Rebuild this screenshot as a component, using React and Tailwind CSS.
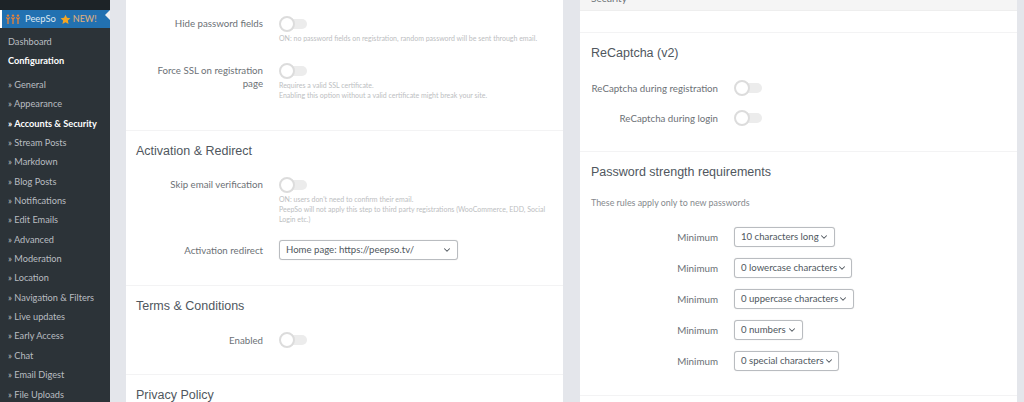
import { ChevronDown } from "lucide-react";

const menuItems = [
  "General",
  "Appearance",
  "Accounts & Security",
  "Stream Posts",
  "Markdown",
  "Blog Posts",
  "Notifications",
  "Edit Emails",
  "Advanced",
  "Moderation",
  "Location",
  "Navigation & Filters",
  "Live updates",
  "Early Access",
  "Chat",
  "Email Digest",
  "File Uploads",
];

const Toggle = () => (
  <div className="relative w-7 h-4 shrink-0">
    <div className="absolute left-1 right-0 top-[3px] h-2.5 rounded-full bg-[#ececec]"></div>
    <div className="absolute left-0 top-0 w-4 h-4 rounded-full bg-white border-2 border-[#dcdcdc]"></div>
  </div>
);

const Select = ({ label, width }) => (
  <div
    className={`${width} h-5 flex items-center justify-between pl-[6px] pr-[5px] bg-white border border-[#b9bcc0] rounded-[3px] text-[9.6px] text-[#50575e] whitespace-nowrap shadow-[0_0_1px_#ccc]`}
  >
    <span>{label}</span>
    <ChevronDown className="w-2.5 h-2.5 shrink-0 text-[#50575e]" strokeWidth={2.5} />
  </div>
);

const Note = ({ children }) => (
  <p className="text-[7px] leading-[10px] text-[#bcbec1] max-w-[272px]">{children}</p>
);

const Heading = ({ children, className = "" }) => (
  <h3 className={`font-['Liberation_Sans',sans-serif] text-[12.5px] leading-5 text-[#50575e] ${className}`}>
    {children}
  </h3>
);

const Row = ({ label, children }) => (
  <div className="flex gap-4">
    <div className="w-[137px] shrink-0 pt-px text-right text-[9.7px] leading-[13px] text-[#6c7176]">{label}</div>
    <div className="flex-1 min-w-0">{children}</div>
  </div>
);

const Divider = () => <div className="h-px bg-[#f3f3f4]"></div>;

const Person = ({ x }) => (
  <g transform={`translate(${x} 0)`}>
    <circle cx="2" cy="1.6" r="1.2" fill="#e8823a" />
    <path d="M0.3 3.4 2 5.2 3.7 3.4M2 5 2 10" fill="none" stroke="#e8823a" strokeWidth="1.3" />
  </g>
);

export default function App() {
  return (
    <div className="flex h-[402px] w-[1024px] overflow-hidden bg-[#e4e6eb] font-['Lato',sans-serif]">
      {/* Sidebar */}
      <aside className="w-[110px] shrink-0 bg-[#2c3338] text-[#b9bdc1] text-[9.2px]">
        <div className="h-2.5 bg-[#1d2327]"></div>
        <div className="relative h-[18px] flex items-center bg-[#2271b1] border-l-2 border-white pl-1 text-[9.4px] text-[#dfe9f2]">
          <svg viewBox="0 0 14 10" className="w-[14px] h-[10px] shrink-0 mr-[5px]">
            <Person x={0} />
            <Person x={5} />
            <Person x={10} />
          </svg>
          <span>PeepSo</span>
          <svg viewBox="0 0 24 24" className="w-[11px] h-[11px] shrink-0 ml-1 mr-[2px]" fill="#f5a623">
            <path d="M12 1.5l3.2 6.9 7.5.9-5.5 5.1 1.5 7.4L12 18.1l-6.7 3.7 1.5-7.4L1.3 9.3l7.5-.9z" />
          </svg>
          <span className="text-[#e3b27a] text-[9px]">NEW!</span>
          <div className="absolute right-0 top-0 w-0 h-0 border-y-[5px] border-y-transparent border-r-[5px] border-r-[#f0f0f1]"></div>
        </div>
        <div className="pl-2 pt-[4px]">
          <div className="h-[19px] leading-[19px]">Dashboard</div>
          <div className="h-[19px] leading-[19px] font-bold text-white mb-[5px]">Configuration</div>
          {menuItems.map((item) => (
            <div
              key={item}
              className={`h-[19.35px] leading-[19.35px] whitespace-nowrap ${
                item === "Accounts & Security" ? "font-bold text-white" : ""
              }`}
            >
              » {item}
            </div>
          ))}
        </div>
      </aside>

      {/* Left card */}
      <main className="ml-4 w-[437px] shrink-0 bg-white">
        <div className="pr-2.5 pt-4">
          <Row label="Hide password fields">
            <Toggle />
            <div className="mt-px">
              <Note>ON: no password fields on registration, random password will be sent through email.</Note>
            </div>
          </Row>
          <div className="mt-5">
            <Row label={<>Force SSL on registration<br />page</>}>
              <Toggle />
              <div className="mt-px">
                <Note>Requires a valid SSL certificate.</Note>
                <Note>Enabling this option without a valid certificate might break your site.</Note>
              </div>
            </Row>
          </div>
        </div>
        <div className="mt-[30px]">
          <Divider />
        </div>
        <Heading className="pl-2.5 pt-2.5">Activation &amp; Redirect</Heading>
        <div className="pr-2.5 pt-4">
          <Row label="Skip email verification">
            <Toggle />
            <div className="mt-px">
              <Note>ON: users don't need to confirm their email.</Note>
              <Note>PeepSo will not apply this step to third party registrations (WooCommerce, EDD, Social Login etc.)</Note>
            </div>
          </Row>
          <div className="mt-4">
            <Row label={<span className="leading-[18px] block">Activation redirect</span>}>
              <Select label="Home page: https://peepso.tv/" width="w-[179px]" />
            </Row>
          </div>
        </div>
        <div className="mt-[25px]">
          <Divider />
        </div>
        <Heading className="pl-2.5 pt-2.5">Terms &amp; Conditions</Heading>
        <div className="pr-2.5 pt-4">
          <Row label={<span className="leading-[14px] block">Enabled</span>}>
            <Toggle />
          </Row>
        </div>
        <div className="mt-[26px]">
          <Divider />
        </div>
        <Heading className="pl-2.5 pt-2.5">Privacy Policy</Heading>
      </main>

      {/* Right card */}
      <section className="ml-[17px] w-[437px] shrink-0 bg-white">
        <div className="h-[11px] overflow-hidden bg-[#f5f5f5] border-b border-[#eeeeee] pl-[11px]">
          <div className="-mt-[9px] text-[10px] leading-[14px] text-[#6c7176]">Security</div>
        </div>
        <div className="mt-[21px]">
          <Divider />
        </div>
        <Heading className="pl-[11px] pt-2.5">ReCaptcha (v2)</Heading>
        <div className="pl-[11px] pt-[17px] flex flex-col gap-[14px]">
          <div className="flex items-center gap-4">
            <div className="w-[127px] text-right text-[9.7px] leading-4 text-[#6c7176] whitespace-nowrap">ReCaptcha during registration</div>
            <Toggle />
          </div>
          <div className="flex items-center gap-4">
            <div className="w-[127px] text-right text-[9.7px] leading-4 text-[#6c7176] whitespace-nowrap">ReCaptcha during login</div>
            <Toggle />
          </div>
        </div>
        <div className="mt-[25px]">
          <Divider />
        </div>
        <Heading className="pl-[11px] pt-2.5">Password strength requirements</Heading>
        <p className="pl-[11px] pt-[15px] text-[8.9px] leading-[12px] text-[#85898d]">These rules apply only to new passwords</p>
        <div className="pt-[18px] flex flex-col gap-[11px]">
          {[
            ["10 characters long", "w-[101px]"],
            ["0 lowercase characters", "w-[118px]"],
            ["0 uppercase characters", "w-[120px]"],
            ["0 numbers", "w-[69px]"],
            ["0 special characters", "w-[105px]"],
          ].map(([label, width]) => (
            <div key={label} className="flex items-center gap-4">
              <div className="w-[138px] text-right text-[9.8px] text-[#6c7176]">Minimum</div>
              <Select label={label} width={width} />
            </div>
          ))}
        </div>
        <div className="mt-[24px]">
          <Divider />
        </div>
      </section>
    </div>
  );
}
